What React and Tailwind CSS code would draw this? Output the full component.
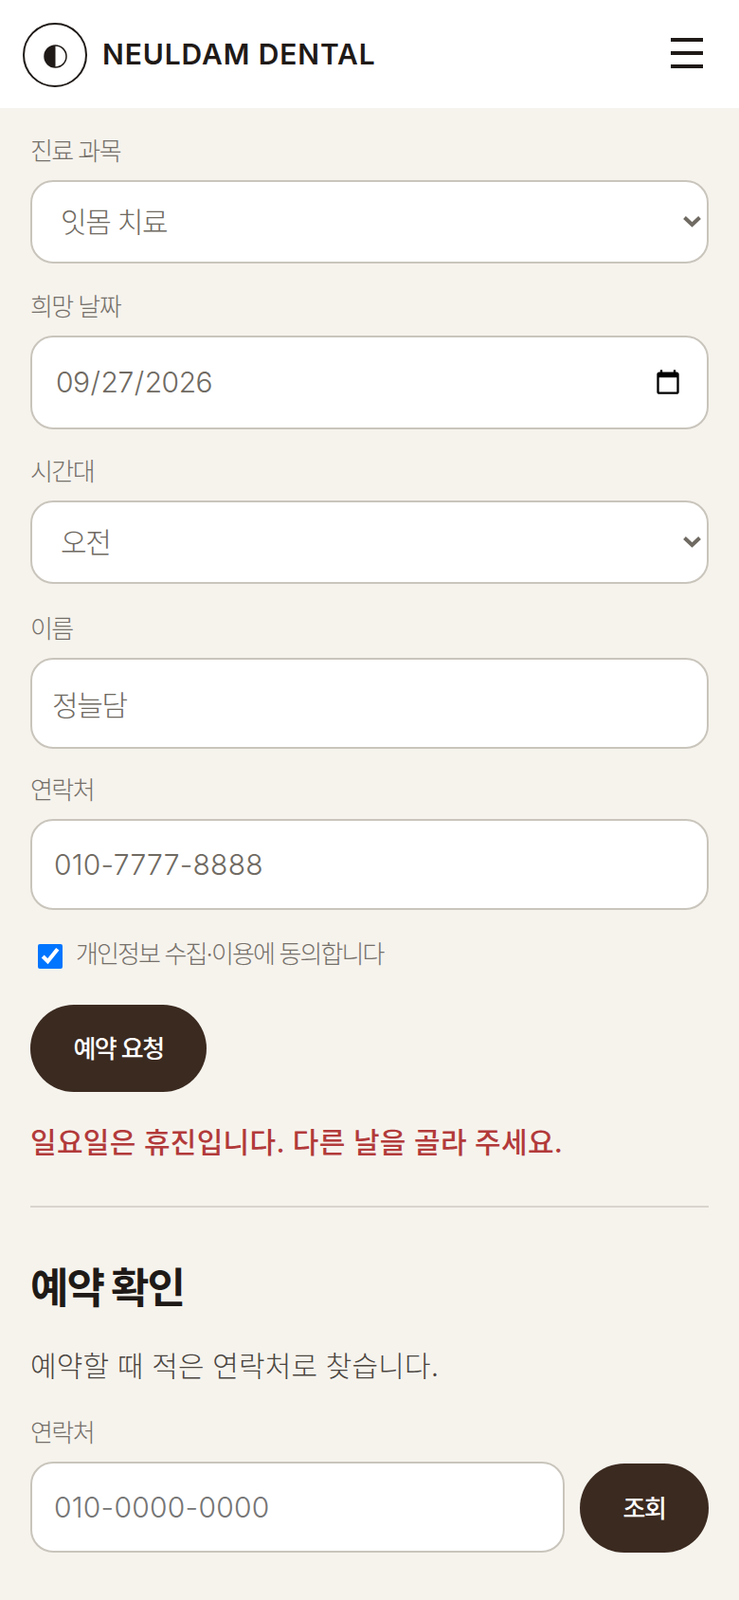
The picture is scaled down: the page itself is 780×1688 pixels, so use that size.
const font = "font-['Inter','Noto_Sans_CJK_KR',sans-serif]";

function Label({ children, className = "" }) {
  return <label className={`block text-[26px] font-light leading-[36px] tracking-[-1.6px] text-[#75706a] ${className}`}>{children}</label>;
}

function Chevron() {
  return (
    <svg className="pointer-events-none absolute right-[8px] top-1/2 -translate-y-1/2" width="20" height="14" viewBox="0 0 20 14" fill="none">
      <path d="M2.5 2.5 L10.5 10 L18.5 2.5" stroke="#6f6a62" strokeWidth="4" />
    </svg>
  );
}

function Select({ value, className }) {
  return (
    <div className={`relative ${className}`}>
      <select defaultValue={value} className="h-[88px] w-full appearance-none rounded-[24px] border-2 border-[#c9c5bc] bg-white pl-[30px] text-[30px] font-light tracking-[-1.3px] text-[#6f6a62] outline-none">
        <option>{value}</option>
      </select>
      <Chevron />
    </div>
  );
}

export default function App() {
  return (
    <div className={`${font} min-h-[1688px] bg-[#f6f3ed]`}>
      <header className="flex h-[114px] items-center justify-between bg-white pl-6 pr-[38px]">
        <div className="flex items-center gap-4">
          <div className="mt-[2px] flex h-[68px] w-[68px] items-center justify-center rounded-full border-2 border-[#1f1a17]">
            <svg className="mt-[2px]" width="25" height="25" viewBox="0 0 25 25">
              <circle cx="12.5" cy="12.5" r="11.5" fill="white" stroke="#1f1a17" strokeWidth="1.5" />
              <path d="M12.5 1 A11.5 11.5 0 0 0 12.5 24 Z" fill="#1f1a17" />
            </svg>
          </div>
          <span className="text-[30px] font-semibold tracking-[0.9px] text-[#1f1a17]">NEULDAM DENTAL</span>
        </div>
        <div className="mb-[2px] flex h-[32px] w-[34px] flex-col justify-between">
          <span className="h-1 bg-[#1f1a17]" />
          <span className="h-1 bg-[#1f1a17]" />
          <span className="h-1 bg-[#1f1a17]" />
        </div>
      </header>
      <main className="px-8 pt-[28px]">
        <Label>진료 과목</Label>
        <Select value="잇몸 치료" className="mt-[12px]" />
        <Label className="mt-[28px]">희망 날짜</Label>
        <input type="date" defaultValue="2026-09-27" className="mt-[12px] block h-[99px] w-full rounded-[24px] border-2 border-[#c9c5bc] bg-white px-6 text-[30px] font-light tracking-[-0.5px] text-[#6f6a62] outline-none [&::-webkit-calendar-picker-indicator]:h-[30px] [&::-webkit-calendar-picker-indicator]:w-[30px]" />
        <Label className="mt-[27px]">시간대</Label>
        <Select value="오전" className="mt-[12px]" />
        <Label className="mt-[30px]">이름</Label>
        <input defaultValue="정늘담" className="mt-[12px] block h-[96px] w-full rounded-[24px] border-2 border-[#c9c5bc] bg-white pl-[21px] pr-6 text-[30px] font-light tracking-[-1.4px] text-[#6f6a62] outline-none" />
        <Label className="mt-[26px]">연락처</Label>
        <input defaultValue="010-7777-8888" className="mt-[12px] block h-[96px] w-full rounded-[24px] border-2 border-[#c9c5bc] bg-white pl-[23px] pr-6 text-[30px] font-light tracking-[0.25px] text-[#6f6a62] outline-none" />
        <div className="mt-[31px] flex h-[36px] items-center pl-2">
          <input type="checkbox" defaultChecked className="m-0 h-[26px] w-[26px]" />
          <span className="mb-1 ml-[14px] text-[26px] font-light leading-[36px] tracking-[-1.9px] text-[#75706a]">개인정보 수집·이용에 동의합니다</span>
        </div>
        <button className="mt-[33px] block h-[92px] w-[186px] rounded-[46px] bg-[#3b2a20] text-[26px] font-medium tracking-[-1.5px] text-white">예약 요청</button>
        <p className="mt-[31px] text-[30px] font-medium leading-[44px] tracking-[0.3px] text-[#b23a3a]">일요일은 휴진입니다. 다른 날을 골라 주세요.</p>
        <hr className="mt-[45px] border-0 border-t-2 border-[#d9d5cd]" />
        <h2 className="mt-[55px] text-[44px] font-bold leading-[60px] tracking-[-2.1px] text-[#1f1a17]">예약 확인</h2>
        <p className="mt-[30px] text-[30px] font-light leading-[44px] tracking-[0.15px] text-[#4a453f]">예약할 때 적은 연락처로 찾습니다.</p>
        <Label className="mt-[31px]">연락처</Label>
        <div className="mt-[12px] flex items-end gap-4">
          <input placeholder="010-0000-0000" className="block h-[96px] min-w-0 flex-1 rounded-[24px] border-2 border-[#c9c5bc] bg-white pl-[23px] pr-6 text-[30px] font-light tracking-[0.25px] text-[#6f6a62] outline-none placeholder:text-[#757575]" />
          <button className="h-[94px] w-[136px] rounded-[47px] bg-[#3b2a20] text-[26px] font-medium tracking-[-1.5px] text-white">조회</button>
        </div>
      </main>
    </div>
  );
}
